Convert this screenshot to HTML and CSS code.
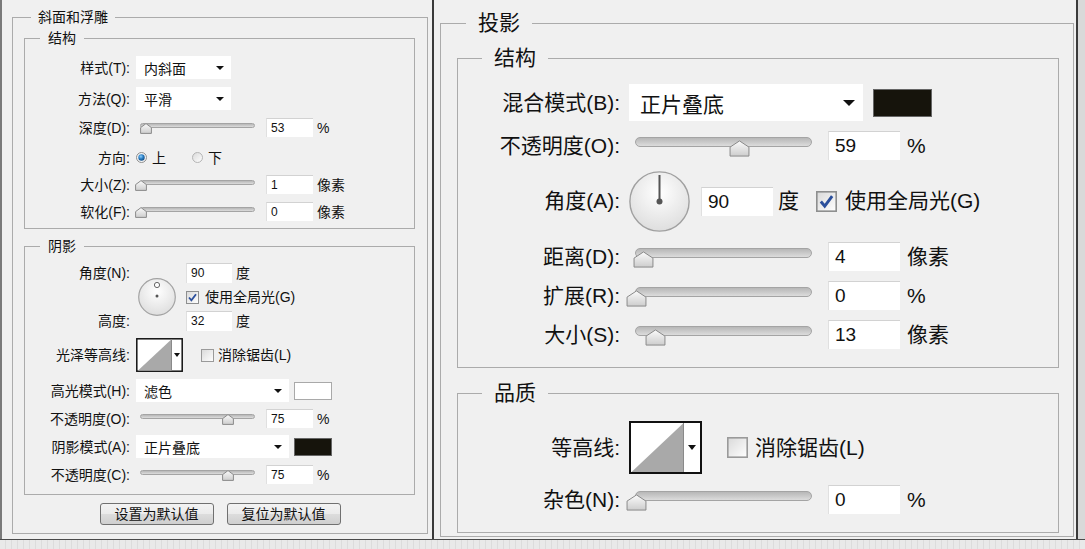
FILE: index.html
```html
<!DOCTYPE html>
<html lang="zh-CN">
<head>
    <meta charset="UTF-8">
    <title>图层样式</title>
    <link rel="stylesheet" href="styles.css">
</head>
<body>
    <!-- 공용 그라데이션 정의 -->
    <svg class="defs" width="0" height="0">
        <defs>
            <linearGradient id="thumbFill" x1="0" y1="0" x2="0" y2="1">
                <stop offset="0" stop-color="#fbfbfb"/>
                <stop offset="1" stop-color="#cdcdcd"/>
            </linearGradient>
            <radialGradient id="dialFill" cx="0.5" cy="0.35" r="0.65">
                <stop offset="0" stop-color="#ffffff"/>
                <stop offset="1" stop-color="#dedede"/>
            </radialGradient>
            <linearGradient id="boxFill" x1="0" y1="0" x2="1" y2="1">
                <stop offset="0" stop-color="#d9d9d9"/>
                <stop offset="1" stop-color="#ffffff"/>
            </linearGradient>
            <radialGradient id="radioDot" cx="0.4" cy="0.35" r="0.7">
                <stop offset="0" stop-color="#8fd0ff"/>
                <stop offset="0.5" stop-color="#2a7fc4"/>
                <stop offset="1" stop-color="#134a80"/>
            </radialGradient>
        </defs>
    </svg>

    <div class="screen">
        <div class="panels">
            <!-- 斜面和浮雕 -->
            <section class="panel bevel">
                <fieldset class="group outer">
                    <legend>斜面和浮雕</legend>

                    <fieldset class="group inner">
                        <legend>结构</legend>
                        <div class="rows">
                            <div class="row tall">
                                <span class="lbl">样式(T):</span>
                                <div class="select sel-short"><span>内斜面</span><i class="caret"></i></div>
                            </div>
                            <div class="row tall">
                                <span class="lbl">方法(Q):</span>
                                <div class="select sel-short"><span>平滑</span><i class="caret"></i></div>
                            </div>
                            <div class="row">
                                <span class="lbl">深度(D):</span>
                                <div class="slider">
                                    <i class="track"></i>
                                    <svg class="thumb" style="left:4px" viewBox="0 0 12 11" preserveAspectRatio="none"><path d="M6 0.6 L11.4 4.6 V10.4 H0.6 V4.6 Z" fill="url(#thumbFill)" stroke="#8a8a8a" stroke-linejoin="round" vector-effect="non-scaling-stroke"/></svg>
                                </div>
                                <span class="field">53</span>
                                <span class="unit">%</span>
                            </div>
                            <div class="row radios">
                                <span class="lbl">方向:</span>
                                <svg class="radio" viewBox="0 0 11 11"><circle cx="5.5" cy="5.5" r="5" fill="#f4f4f4" stroke="#8e8e8e"/><circle cx="5.5" cy="5.5" r="3.2" fill="url(#radioDot)"/></svg>
                                <span class="radio-text">上</span>
                                <svg class="radio radio-2" viewBox="0 0 11 11"><circle cx="5.5" cy="5.5" r="5" fill="url(#boxFill)" stroke="#b4b4b4"/></svg>
                                <span class="radio-text">下</span>
                            </div>
                            <div class="row">
                                <span class="lbl">大小(Z):</span>
                                <div class="slider">
                                    <i class="track"></i>
                                    <svg class="thumb" style="left:-1px" viewBox="0 0 12 11" preserveAspectRatio="none"><path d="M6 0.6 L11.4 4.6 V10.4 H0.6 V4.6 Z" fill="url(#thumbFill)" stroke="#8a8a8a" stroke-linejoin="round" vector-effect="non-scaling-stroke"/></svg>
                                </div>
                                <span class="field">1</span>
                                <span class="unit">像素</span>
                            </div>
                            <div class="row">
                                <span class="lbl">软化(F):</span>
                                <div class="slider">
                                    <i class="track"></i>
                                    <svg class="thumb" style="left:-1px" viewBox="0 0 12 11" preserveAspectRatio="none"><path d="M6 0.6 L11.4 4.6 V10.4 H0.6 V4.6 Z" fill="url(#thumbFill)" stroke="#8a8a8a" stroke-linejoin="round" vector-effect="non-scaling-stroke"/></svg>
                                </div>
                                <span class="field">0</span>
                                <span class="unit">像素</span>
                            </div>
                        </div>
                    </fieldset>

                    <fieldset class="group inner shade">
                        <legend>阴影</legend>
                        <div class="rows">
                            <div class="angle-group">
                                <div class="lbl-col"><span>角度(N):</span><span>高度:</span></div>
                                <svg class="dial-sm" viewBox="0 0 38 38"><circle cx="19" cy="19" r="18.3" fill="url(#dialFill)" stroke="#a3a3a3" stroke-width="1.2"/><circle cx="19" cy="7" r="2.6" fill="#fff" stroke="#666"/><circle cx="19" cy="18" r="1.5" fill="#555"/></svg>
                                <div class="angle-fields">
                                    <div class="af-row"><span class="field">90</span><span class="unit">度</span></div>
                                    <div class="af-row chk-row">
                                        <svg class="check" viewBox="0 0 13 13"><rect x="0.5" y="0.5" width="12" height="12" fill="url(#boxFill)" stroke="#8e8f8f"/><path d="M3 6.5 L5.4 9.4 L10 3.2" fill="none" stroke="#2b4f9c" stroke-width="1.8"/></svg>
                                        <span>使用全局光(G)</span>
                                    </div>
                                    <div class="af-row"><span class="field">32</span><span class="unit">度</span></div>
                                </div>
                            </div>
                            <div class="row contour-row">
                                <span class="lbl">光泽等高线:</span>
                                <svg class="contour" viewBox="0 0 47 34"><rect x="0.8" y="0.8" width="45.4" height="32.4" fill="#fff" stroke="#111" stroke-width="1.5"/><polygon points="2,32.5 35,1.8 35,32.5" fill="#a9a9a9"/><line x1="35.5" y1="1.5" x2="35.5" y2="32.5" stroke="#8a8a8a"/><polygon points="38,15 44,15 41,19" fill="#111"/></svg>
                                <svg class="check check-gap" viewBox="0 0 13 13"><rect x="0.5" y="0.5" width="12" height="12" fill="url(#boxFill)" stroke="#9a9a9a"/></svg>
                                <span class="check-text">消除锯齿(L)</span>
                            </div>
                            <div class="row tall">
                                <span class="lbl">高光模式(H):</span>
                                <div class="select sel-wide"><span>滤色</span><i class="caret"></i></div>
                                <span class="swatch swatch-white"></span>
                            </div>
                            <div class="row">
                                <span class="lbl">不透明度(O):</span>
                                <div class="slider">
                                    <i class="track"></i>
                                    <svg class="thumb" style="left:86px" viewBox="0 0 12 11" preserveAspectRatio="none"><path d="M6 0.6 L11.4 4.6 V10.4 H0.6 V4.6 Z" fill="url(#thumbFill)" stroke="#8a8a8a" stroke-linejoin="round" vector-effect="non-scaling-stroke"/></svg>
                                </div>
                                <span class="field">75</span>
                                <span class="unit">%</span>
                            </div>
                            <div class="row tall">
                                <span class="lbl">阴影模式(A):</span>
                                <div class="select sel-wide"><span>正片叠底</span><i class="caret"></i></div>
                                <span class="swatch swatch-dark"></span>
                            </div>
                            <div class="row">
                                <span class="lbl">不透明度(C):</span>
                                <div class="slider">
                                    <i class="track"></i>
                                    <svg class="thumb" style="left:86px" viewBox="0 0 12 11" preserveAspectRatio="none"><path d="M6 0.6 L11.4 4.6 V10.4 H0.6 V4.6 Z" fill="url(#thumbFill)" stroke="#8a8a8a" stroke-linejoin="round" vector-effect="non-scaling-stroke"/></svg>
                                </div>
                                <span class="field">75</span>
                                <span class="unit">%</span>
                            </div>
                        </div>
                    </fieldset>

                    <div class="buttons">
                        <button class="btn">设置为默认值</button>
                        <button class="btn">复位为默认值</button>
                    </div>
                </fieldset>
            </section>

            <!-- 投影 -->
            <section class="panel shadow">
                <fieldset class="group outer">
                    <legend>投影</legend>

                    <fieldset class="group inner">
                        <legend>结构</legend>
                        <div class="rows">
                            <div class="row tall">
                                <span class="lbl">混合模式(B):</span>
                                <div class="select sel-big"><span>正片叠底</span><i class="caret"></i></div>
                                <span class="swatch swatch-dark"></span>
                            </div>
                            <div class="row">
                                <span class="lbl">不透明度(O):</span>
                                <div class="slider">
                                    <i class="track"></i>
                                    <svg class="thumb" style="left:100px" viewBox="0 0 12 11" preserveAspectRatio="none"><path d="M6 0.6 L11.4 4.6 V10.4 H0.6 V4.6 Z" fill="url(#thumbFill)" stroke="#8a8a8a" stroke-linejoin="round" vector-effect="non-scaling-stroke"/></svg>
                                </div>
                                <span class="field">59</span>
                                <span class="unit">%</span>
                            </div>
                            <div class="row angle-row">
                                <span class="lbl">角度(A):</span>
                                <svg class="dial-lg" viewBox="0 0 61 61"><circle cx="30.5" cy="30.5" r="29.6" fill="url(#dialFill)" stroke="#a0a0a0" stroke-width="1.4"/><line x1="30.5" y1="30.5" x2="30.5" y2="4" stroke="#555" stroke-width="2"/><circle cx="30.5" cy="30.5" r="3" fill="#555"/></svg>
                                <span class="field field-angle">90</span>
                                <span class="unit">度</span>
                                <svg class="check check-gap" viewBox="0 0 13 13"><rect x="0.5" y="0.5" width="12" height="12" fill="url(#boxFill)" stroke="#8e8f8f"/><path d="M3 6.5 L5.4 9.4 L10 3.2" fill="none" stroke="#2b4f9c" stroke-width="1.8"/></svg>
                                <span class="check-text">使用全局光(G)</span>
                            </div>
                            <div class="row">
                                <span class="lbl">距离(D):</span>
                                <div class="slider">
                                    <i class="track"></i>
                                    <svg class="thumb" style="left:4px" viewBox="0 0 12 11" preserveAspectRatio="none"><path d="M6 0.6 L11.4 4.6 V10.4 H0.6 V4.6 Z" fill="url(#thumbFill)" stroke="#8a8a8a" stroke-linejoin="round" vector-effect="non-scaling-stroke"/></svg>
                                </div>
                                <span class="field">4</span>
                                <span class="unit">像素</span>
                            </div>
                            <div class="row">
                                <span class="lbl">扩展(R):</span>
                                <div class="slider">
                                    <i class="track"></i>
                                    <svg class="thumb" style="left:-3px" viewBox="0 0 12 11" preserveAspectRatio="none"><path d="M6 0.6 L11.4 4.6 V10.4 H0.6 V4.6 Z" fill="url(#thumbFill)" stroke="#8a8a8a" stroke-linejoin="round" vector-effect="non-scaling-stroke"/></svg>
                                </div>
                                <span class="field">0</span>
                                <span class="unit">%</span>
                            </div>
                            <div class="row">
                                <span class="lbl">大小(S):</span>
                                <div class="slider">
                                    <i class="track"></i>
                                    <svg class="thumb" style="left:16px" viewBox="0 0 12 11" preserveAspectRatio="none"><path d="M6 0.6 L11.4 4.6 V10.4 H0.6 V4.6 Z" fill="url(#thumbFill)" stroke="#8a8a8a" stroke-linejoin="round" vector-effect="non-scaling-stroke"/></svg>
                                </div>
                                <span class="field">13</span>
                                <span class="unit">像素</span>
                            </div>
                        </div>
                    </fieldset>

                    <fieldset class="group inner quality">
                        <legend>品质</legend>
                        <div class="rows">
                            <div class="row contour-row">
                                <span class="lbl">等高线:</span>
                                <svg class="contour" viewBox="0 0 73 53"><rect x="1" y="1" width="71" height="51" fill="#fff" stroke="#111" stroke-width="2"/><polygon points="2.5,51 54,2.5 54,51" fill="#a9a9a9"/><line x1="54.5" y1="2" x2="54.5" y2="51" stroke="#8a8a8a"/><polygon points="59,24 67,24 63,29" fill="#111"/></svg>
                                <svg class="check check-gap" viewBox="0 0 13 13"><rect x="0.5" y="0.5" width="12" height="12" fill="url(#boxFill)" stroke="#9a9a9a"/></svg>
                                <span class="check-text">消除锯齿(L)</span>
                            </div>
                            <div class="row">
                                <span class="lbl">杂色(N):</span>
                                <div class="slider">
                                    <i class="track"></i>
                                    <svg class="thumb" style="left:-3px" viewBox="0 0 12 11" preserveAspectRatio="none"><path d="M6 0.6 L11.4 4.6 V10.4 H0.6 V4.6 Z" fill="url(#thumbFill)" stroke="#8a8a8a" stroke-linejoin="round" vector-effect="non-scaling-stroke"/></svg>
                                </div>
                                <span class="field">0</span>
                                <span class="unit">%</span>
                            </div>
                        </div>
                    </fieldset>
                </fieldset>
            </section>

            <div class="edge"></div>
        </div>
        <div class="strip"></div>
    </div>
</body>
</html>
```

FILE: styles.css
```css
body {
    margin: 0;
    background-color: #f0f0f0;
    font-family: "Liberation Sans", "Noto Sans CJK SC", sans-serif;
    color: #111;
}
.defs {
    position: absolute;
}
.screen {
    width: 1085px;
    height: 549px;
    overflow: hidden;
}
.panels {
    display: flex;
    height: 539px;
    border-bottom: 1px solid #4a4a4a;
}
.panel {
    box-sizing: border-box;
    height: 100%;
}
.edge {
    flex: 1;
    background-color: #d9d9d9;
}
.strip {
    height: 9px;
    background: repeating-linear-gradient(90deg, #e9e9e9 0 5px, #dcdcdc 5px 6px);
}

/* 그룹 박스 */
fieldset.group {
    margin: 0;
    padding: 0;
    border: 1px solid #ababab;
    min-width: 0;
}
.rows {
    display: flex;
    flex-direction: column;
}
.row {
    display: flex;
    align-items: center;
    flex: none;
}
.lbl {
    flex: none;
    text-align: right;
    white-space: nowrap;
}
.select {
    display: flex;
    align-items: center;
    justify-content: space-between;
    box-sizing: border-box;
    height: 100%;
    background-color: #fff;
    flex: none;
}
.caret {
    width: 0;
    height: 0;
    border-left: 4px solid transparent;
    border-right: 4px solid transparent;
    border-top: 4px solid #111;
}
.field {
    flex: none;
    box-sizing: border-box;
    background-color: #fff;
    border-top: 1px solid #d2d2d2;
    border-left: 1px solid #e0e0e0;
}
.slider {
    position: relative;
    flex: none;
    height: 100%;
}
.track {
    position: absolute;
    box-sizing: border-box;
    border: 1px solid #a4a4a4;
    background: linear-gradient(#b7b7b7, #dcdcdc);
}
.thumb {
    position: absolute;
}
.swatch {
    flex: none;
    box-sizing: border-box;
}
.swatch-white {
    background-color: #fff;
    border: 1px solid #a9a9a9;
}
.swatch-dark {
    background-color: #16140c;
    border: 1px solid #666;
}
.check,
.radio,
.contour {
    flex: none;
    display: block;
}

/* 왼쪽: 斜面和浮雕 */
.bevel {
    width: 434px;
    border-left: 2px solid #7a7a7a;
    border-right: 2px solid #3a3a3a;
    padding: 9px 4px 0 10px;
    font-size: 14px;
}
.bevel legend {
    line-height: 16px;
}
.bevel .outer {
    padding-bottom: 8px;
}
.bevel .outer > legend {
    margin-left: 18px;
    padding: 0 7px;
}
.bevel .inner {
    margin: 5px 12px 0 11px;
    padding: 10px 0 7px;
}
.bevel .inner > legend {
    margin-left: 15px;
    padding: 0 8px;
}
.bevel .inner.shade {
    margin-top: 9px;
    padding: 9px 0 10px;
}
.bevel .rows {
    gap: 8px;
}
.bevel .shade .rows {
    gap: 7px;
}
.bevel .row {
    height: 19px;
}
.bevel .row.tall {
    height: 23px;
}
.bevel .lbl {
    width: 105px;
    margin-right: 6px;
    line-height: 16px;
}
.bevel .select {
    padding: 0 7px 0 8px;
}
.bevel .sel-short {
    width: 95px;
}
.bevel .sel-wide {
    width: 153px;
}
.bevel .field {
    width: 47px;
    height: 19px;
    margin-left: 6px;
    padding-left: 4px;
    font-size: 12px;
    line-height: 18px;
}
.bevel .unit {
    margin-left: 4px;
    line-height: 16px;
}
.bevel .slider {
    width: 124px;
}
.bevel .track {
    left: 4px;
    right: 5px;
    top: 5px;
    height: 5px;
    border-radius: 3px;
}
.bevel .thumb {
    top: 5px;
    width: 12px;
    height: 11px;
}
.bevel .radios {
    margin-top: 3px;
}
.bevel .radio {
    width: 11px;
    height: 11px;
}
.bevel .radio-text {
    margin-left: 5px;
    line-height: 16px;
}
.bevel .radio-2 {
    margin-left: 26px;
}
.angle-group {
    display: flex;
    align-items: center;
    height: 68px;
}
.lbl-col {
    width: 105px;
    align-self: stretch;
    display: flex;
    flex-direction: column;
    justify-content: space-between;
    align-items: flex-end;
    line-height: 20px;
}
.dial-sm {
    width: 38px;
    height: 38px;
    margin-left: 8px;
    flex: none;
}
.angle-fields {
    display: flex;
    flex-direction: column;
    gap: 6px;
    margin-left: 10px;
}
.af-row {
    display: flex;
    align-items: center;
    height: 20px;
}
.af-row .field {
    margin-left: 0;
    width: 46px;
    height: 20px;
    line-height: 19px;
}
.chk-row {
    height: 16px;
    line-height: 16px;
}
.bevel .check {
    width: 13px;
    height: 13px;
}
.chk-row .check {
    margin-right: 6px;
}
.bevel .contour-row {
    height: 34px;
}
.bevel .contour {
    width: 47px;
    height: 34px;
}
.bevel .check-gap {
    margin-left: 18px;
}
.bevel .check-text {
    margin-left: 4px;
    line-height: 16px;
}
.bevel .swatch {
    width: 38px;
    height: 18px;
    margin-left: 5px;
}
.buttons {
    display: flex;
    justify-content: center;
    gap: 13px;
    margin-top: 8px;
}
.btn {
    width: 114px;
    height: 22px;
    padding: 0;
    border: 1px solid #707070;
    border-radius: 3px;
    background: linear-gradient(#f3f3f3, #ebebeb 48%, #dcdcdc 52%, #cfcfcf);
    font-family: "Liberation Sans", "Noto Sans CJK SC", sans-serif;
    font-size: 14px;
    line-height: 18px;
    color: #111;
}

/* 오른쪽: 投影 */
.shadow {
    width: 644px;
    border-right: 2px solid #3a3a3a;
    padding: 10px 2px 0 6px;
    font-size: 21px;
}
.shadow legend {
    line-height: 26px;
}
.shadow .outer {
    padding-bottom: 3px;
}
.shadow .outer > legend {
    margin-left: 25px;
    padding: 0 12px;
}
.shadow .inner {
    margin: 9px 14px 0 16px;
    padding: 13px 0 18px;
}
.shadow .inner > legend {
    margin-left: 24px;
    padding: 0 12px;
}
.shadow .inner.quality {
    margin-top: 12px;
    padding: 15px 0 18px;
}
.shadow .rows {
    gap: 10px;
}
.shadow .quality .rows {
    gap: 11px;
}
.shadow .row {
    height: 29px;
}
.shadow .row.tall {
    height: 37px;
}
.shadow .lbl {
    width: 162px;
    margin-right: 9px;
    line-height: 26px;
}
.shadow .sel-big {
    width: 234px;
    padding: 0 8px 0 11px;
}
.shadow .sel-big .caret {
    border-left-width: 6px;
    border-right-width: 6px;
    border-top-width: 6px;
}
.shadow .swatch {
    width: 59px;
    height: 28px;
    margin-left: 10px;
}
.shadow .field {
    width: 72px;
    height: 29px;
    margin-left: 10px;
    padding-left: 6px;
    font-size: 19px;
    line-height: 28px;
}
.shadow .unit {
    margin-left: 7px;
    line-height: 26px;
}
.shadow .slider {
    width: 189px;
}
.shadow .track {
    left: 6px;
    right: 6px;
    top: 6px;
    height: 10px;
    border-radius: 5px;
}
.shadow .thumb {
    top: 9px;
    width: 21px;
    height: 17px;
}
.shadow .angle-row {
    height: 62px;
}
.dial-lg {
    width: 61px;
    height: 61px;
    flex: none;
}
.shadow .field-angle {
    margin-left: 11px;
}
.shadow .angle-row .unit {
    margin-left: 5px;
}
.shadow .check {
    width: 21px;
    height: 21px;
}
.shadow .check-gap {
    margin-left: 17px;
}
.shadow .check-text {
    margin-left: 8px;
    line-height: 26px;
}
.shadow .contour-row {
    height: 53px;
}
.shadow .contour {
    width: 73px;
    height: 53px;
}
.shadow .contour-row .check-gap {
    margin-left: 25px;
}
.shadow .contour-row .check-text {
    margin-left: 7px;
}
```
